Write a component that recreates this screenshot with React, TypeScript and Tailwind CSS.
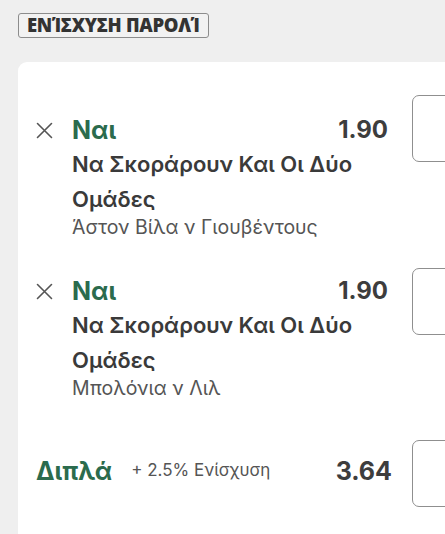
import React from "react";

const GREEN = "text-[#2b6b4d]";

function CloseIcon() {
  return (
    <svg width="17" height="17" viewBox="0 0 17 17" fill="none">
      <path d="M1.5 1.5L15.5 15.5M15.5 1.5L1.5 15.5" stroke="#555" strokeWidth="1.6" strokeLinecap="round" />
    </svg>
  );
}

function StakeBox() {
  return <div className="w-[90px] h-[67px] shrink-0 rounded-[7px] border-[1.5px] border-[#8f8f8f] bg-white" />;
}

type Selection = {
  pick: string;
  odds: string;
  market: string;
  event: string;
  pt: string;
  mt: string;
};

const selections: Selection[] = [
  {
    pick: "Ναι",
    odds: "1.90",
    market: "Να Σκοράρουν Και Οι Δύο Ομάδες",
    event: "Άστον Βίλα ν Γιουβέντους",
    pt: "pt-[21px]",
    mt: "mt-0",
  },
  {
    pick: "Ναι",
    odds: "1.90",
    market: "Να Σκοράρουν Και Οι Δύο Ομάδες",
    event: "Μπολόνια ν Λιλ",
    pt: "pt-[9px]",
    mt: "mt-[31px]",
  },
];

function SelectionRow({ s }: { s: Selection }) {
  return (
    <div className={`flex items-start ${s.mt}`}>
      <div className={`flex w-[352px] shrink-0 ${s.pt}`}>
        {/* remove button */}
        <div className="w-[36px] h-[28px] flex items-center shrink-0">
          <CloseIcon />
        </div>
        <div className="flex-1">
          <div className="h-[28px] flex items-center justify-between">
            <span className={`text-[25px] leading-[28px] font-bold ${GREEN}`}>{s.pick}</span>
            <span className="text-[24px] leading-[28px] font-bold text-[#3d3d3d]">{s.odds}</span>
          </div>
          <div className="mt-[3px] text-[22px] leading-[35px] font-semibold text-[#3a3a3a]">
            {s.market}
          </div>
          <div className="text-[19.5px] leading-[20px] text-[#555]">{s.event}</div>
        </div>
      </div>
      <div className="ml-[24px]">
        <StakeBox />
      </div>
    </div>
  );
}

export default function App() {
  return (
    <div
      className="w-[445px] h-[534px] overflow-hidden bg-[#efefef]"
      style={{ fontFamily: "Inter, 'Noto Sans', sans-serif" }}
    >
      <div className="pt-[13px] pl-[18px]">
        <span
          className="inline-block h-[25px] px-[8px] rounded-[3px] border-[1.5px] border-[#8c8c8c] bg-[#f2f2f2] text-[18.5px] leading-[22px] font-extrabold tracking-[-0.3px] text-[#333]"
          style={{ fontFamily: "'Open Sans', 'DejaVu Sans', sans-serif" }}
        >
          ΕΝΊΣΧΥΣΗ ΠΑΡΟΛΊ
        </span>
      </div>

      <div className="ml-[18px] mt-[24px] w-[480px] h-[520px] rounded-tl-[9px] bg-white pl-[18px] pt-[33px]">
        {selections.map((s, i) => (
          <SelectionRow key={i} s={s} />
        ))}

        {/* multiple */}
        <div className="flex items-start mt-[42px]">
          <div className="flex w-[356px] shrink-0 items-center justify-between pt-[17px]">
            <div className="flex items-center">
              <span className={`text-[25px] leading-[28px] font-bold ${GREEN}`}>Διπλά</span>
              <span className="ml-[19px] text-[17px] text-[#555]">+ 2.5% Ενίσχυση</span>
            </div>
            <span className="text-[25px] leading-[28px] font-bold text-[#3d3d3d]">3.64</span>
          </div>
          <div className="ml-[20px]">
            <StakeBox />
          </div>
        </div>
      </div>
    </div>
  );
}
